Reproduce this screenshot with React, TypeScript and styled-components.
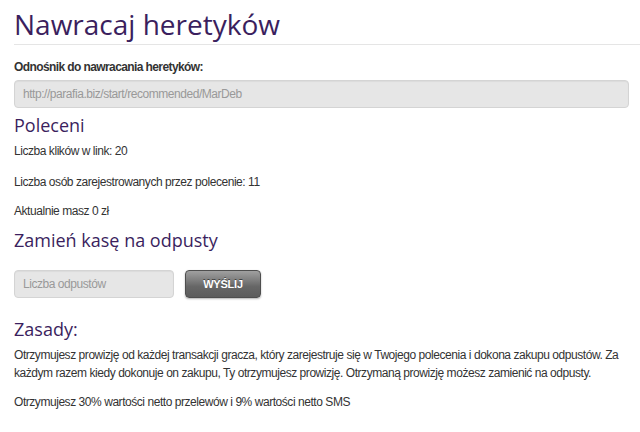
import React from "react";
import styled, { createGlobalStyle } from "styled-components";

const Global = createGlobalStyle`
  html, body { margin: 0; padding: 0; background: #fff; }
  body { font-family: "Liberation Sans", Arial, sans-serif; font-size: 12px; line-height: 18px; color: #333; letter-spacing: -0.45px; }
`;

const Page = styled.div`
  padding: 0 11px 0 14px;
`;

const TitleBar = styled.header`
  margin-right: -11px;
  border-bottom: 1px solid #e5e5e5;
  padding-top: 7px;
  height: 45px;
  box-sizing: border-box;
`;

const Heading = styled.h1<{ $size: number }>`
  margin: 0;
  font-family: "Open Sans", sans-serif;
  font-weight: 400;
  font-size: ${(p) => p.$size}px;
  line-height: ${(p) => Math.round(p.$size * 1.2)}px;
  letter-spacing: 0;
  color: #3b1f5e;
`;

const Label = styled.div`
  margin-top: 13px;
  font-weight: bold;
  letter-spacing: -0.6px;
  color: #333;
`;

const Field = styled.input<{ $width?: string }>`
  box-sizing: border-box;
  width: ${(p) => p.$width ?? "100%"};
  height: 28px;
  padding: 0 8px;
  background: #e6e6e6;
  border: 1px solid #d4d4d4;
  border-radius: 4px;
  font-family: "Liberation Sans", Arial, sans-serif;
  font-size: 12px;
  letter-spacing: -0.45px;
  color: #999;
  box-shadow: inset 0 1px 1px rgba(0,0,0,0.05);
  &::placeholder { color: #999; }
`;

const Section = styled.section<{ $top: number }>`
  margin-top: ${(p) => p.$top}px;
`;

const Para = styled.p<{ $top: number }>`
  margin: ${(p) => p.$top}px 0 0;
`;

const Row = styled.div`
  display: flex;
  align-items: center;
  gap: 11px;
`;

const Button = styled.button`
  width: 76px;
  height: 28px;
  border: 1px solid #4e4e4e;
  border-radius: 4px;
  background: linear-gradient(#a0a0a0, #7a7a7a 40%, #666 60%, #5c5c5c);
  color: #fff;
  font-family: "Liberation Sans", Arial, sans-serif;
  font-weight: bold;
  font-size: 11px;
  letter-spacing: -0.2px;
  text-shadow: 0 -1px 0 rgba(0,0,0,0.5);
  box-shadow: 0 1px 2px rgba(0,0,0,0.3);
  padding: 0;
`;

export default function App() {
  return (
    <>
      <Global />
      <Page>
        <TitleBar>
          <Heading $size={28}>Nawracaj heretyków</Heading>
        </TitleBar>
        <Label>Odnośnik do nawracania heretyków:</Label>
        <Section $top={4}>
          <Field readOnly value="http://parafia.biz/start/recommended/MarDeb" />
        </Section>
        <Section $top={6}>
          <Heading $size={18}>Poleceni</Heading>
          <Para $top={6}>Liczba klików w link: 20</Para>
          <Para $top={13}>Liczba osób zarejestrowanych przez polecenie: 11</Para>
          <Para $top={11}>Aktualnie masz 0 zł</Para>
        </Section>
        <Section $top={9}>
          <Heading $size={18}>Zamień kasę na odpusty</Heading>
        </Section>
        <Section $top={19}>
          <Row>
            <Field $width="160px" placeholder="Liczba odpustów" />
            <Button>WYŚLIJ</Button>
          </Row>
        </Section>
        <Section $top={20}>
          <Heading $size={18}>Zasady:</Heading>
          <Para $top={6}>
            Otrzymujesz prowizję od każdej transakcji gracza, który zarejestruje się w Twojego polecenia i dokona zakupu odpustów. Za każdym razem kiedy dokonuje on zakupu, Ty otrzymujesz prowizję. Otrzymaną prowizję możesz zamienić na odpusty.
          </Para>
          <Para $top={11}>Otrzymujesz 30% wartości netto przelewów i 9% wartości netto SMS</Para>
        </Section>
      </Page>
    </>
  );
}
